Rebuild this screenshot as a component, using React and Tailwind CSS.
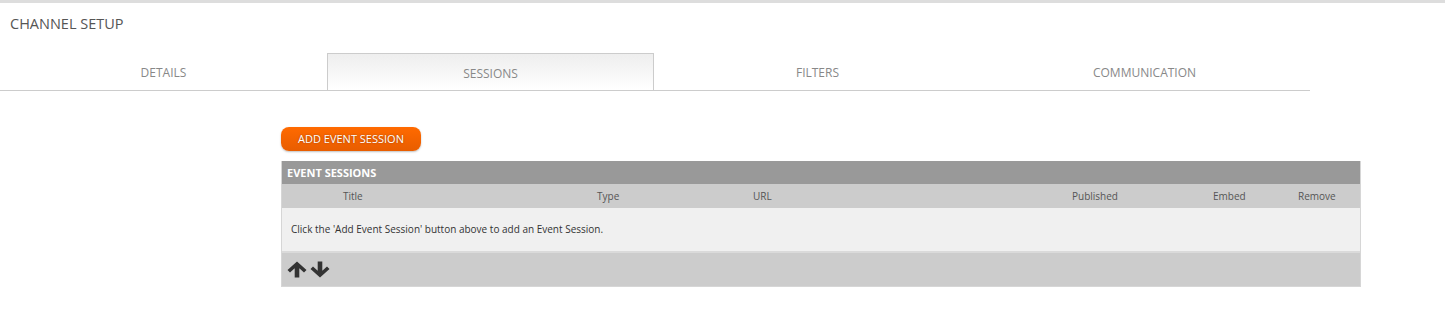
const tabs = ["DETAILS", "SESSIONS", "FILTERS", "COMMUNICATION"];

const cols = ["Title", "Type", "URL", "Published", "Embed", "Remove"];

// thick arrow, like the old font icon
const Arrow = ({ down }) => (
  <svg
    width="20"
    height="17"
    viewBox="0 0 20 17"
    className={down ? "rotate-180" : ""}
  >
    <path
      d="M10 0.5 L19.5 9 L17 11.5 L12.3 7.2 L12.3 16.5 L7.7 16.5 L7.7 7.2 L3 11.5 L0.5 9 Z"
      fill="#333333"
    />
  </svg>
);

export default function App() {
  return (
    <div
      className="min-h-[326px] bg-white border-t-[3px] border-[#dddddd]"
      style={{ fontFamily: "'Open Sans', 'Noto Sans', sans-serif" }}
    >
      {/* TITLE */}
      <div className="px-[10px] pt-[10px] h-[50px] text-[14.5px] text-[#555555]">
        CHANNEL SETUP
      </div>

      {/* TABS */}
      <div className="flex w-[1310px] border-b border-[#cccccc]">
        {tabs.map((t) =>
          t === "SESSIONS" ? (
            <div
              key={t}
              className="w-[327px] h-[37px] -mb-px pt-[3px] flex items-center justify-center border border-b-0 border-[#cccccc] bg-gradient-to-b from-[#eeeeee] to-white text-[12px] text-[#888888]"
            >
              {t}
            </div>
          ) : (
            <div
              key={t}
              className="w-[327px] h-[37px] pt-[3px] flex items-center justify-center text-[12px] text-[#888888]"
            >
              {t}
            </div>
          )
        )}
      </div>

      {/* CONTENT */}
      <div className="pl-[281px] pt-[34px]">
        <button className="w-[140px] h-[24px] rounded-[8px] bg-gradient-to-b from-[#ff6a00] to-[#e85d00] text-white text-[11px] shadow-[0_1px_2px_rgba(0,0,0,0.25)] [text-shadow:0_0_2px_rgba(0,0,0,0.35)]">
          ADD EVENT SESSION
        </button>

        <div className="mt-[10px] w-[1080px] border-x border-b border-[#d6d6d6]">
          <div className="h-[23px] bg-[#999999] text-white text-[11px] font-bold px-[5px] flex items-center">
            EVENT SESSIONS
          </div>

          <div className="h-[24px] bg-[#cccccc] grid grid-cols-[254px_156px_319px_141px_85px_1fr] pl-[61px] items-center text-[10px] text-[#555555]">
            {cols.map((c) => (
              <div key={c}>{c}</div>
            ))}
          </div>

          <div className="h-[45px] bg-[#f0f0f0] border-b-2 border-[#dadada] px-[9px] flex items-center text-[10px] text-[#333333]">
            Click the 'Add Event Session' button above to add an Event Session.
          </div>

          <div className="h-[33px] bg-[#cccccc] flex items-center gap-[3px] px-[5px]">
            <Arrow />
            <Arrow down />
          </div>
        </div>
      </div>
    </div>
  );
}
